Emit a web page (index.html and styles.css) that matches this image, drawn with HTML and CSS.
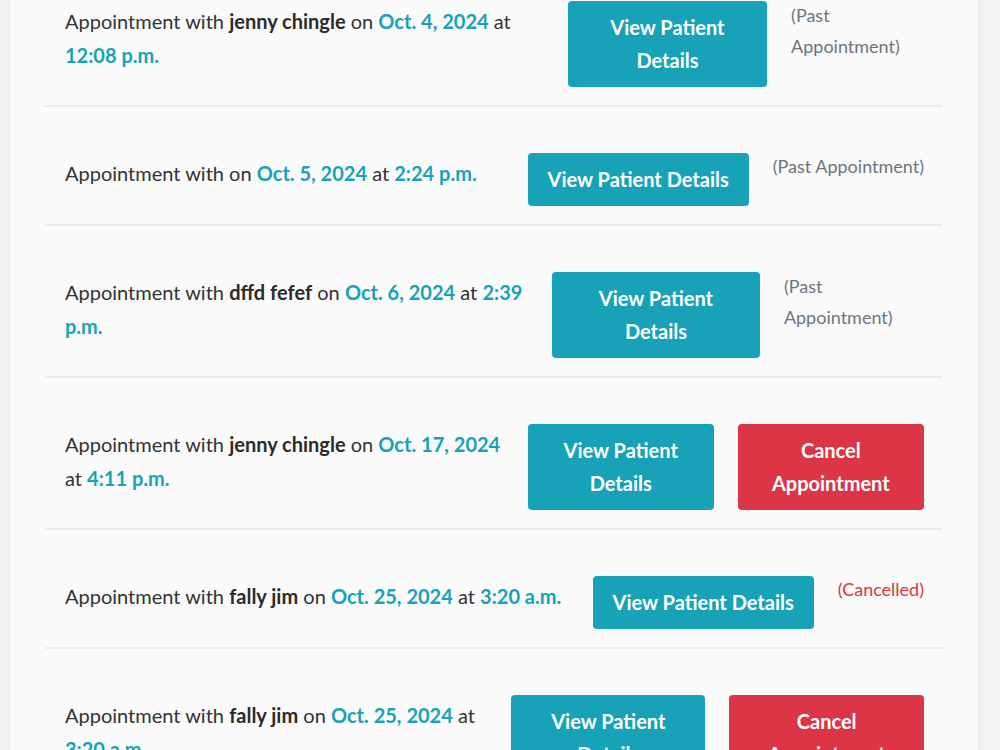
FILE: index.html
```html
<!DOCTYPE html>
<html lang="en">
<head>
<meta charset="utf-8">
<title>Appointments</title>
<link rel="stylesheet" href="styles.css">
</head>
<body>
<div class="card">
  <ul class="appt-list">
    <li class="appt">
      <span class="appt-text">Appointment with <strong>jenny chingle</strong> on <span class="hl">Oct. 4, 2024</span> at <span class="hl">12:08 p.m.</span></span>
      <a class="btn btn-info" href="#">View Patient Details</a>
      <span class="status">(Past Appointment)</span>
    </li>
    <li class="appt">
      <span class="appt-text">Appointment with  on <span class="hl">Oct. 5, 2024</span> at <span class="hl">2:24 p.m.</span></span>
      <a class="btn btn-info" href="#">View Patient Details</a>
      <span class="status">(Past Appointment)</span>
    </li>
    <li class="appt">
      <span class="appt-text">Appointment with <strong>dffd fefef</strong> on <span class="hl">Oct. 6, 2024</span> at <span class="hl">2:39 p.m.</span></span>
      <a class="btn btn-info" href="#">View Patient Details</a>
      <span class="status">(Past Appointment)</span>
    </li>
    <li class="appt">
      <span class="appt-text">Appointment with <strong>jenny chingle</strong> on <span class="hl">Oct. 17, 2024</span> at <span class="hl">4:11 p.m.</span></span>
      <a class="btn btn-info" href="#">View Patient Details</a>
      <a class="btn btn-danger" href="#">Cancel Appointment</a>
    </li>
    <li class="appt">
      <span class="appt-text">Appointment with <strong>fally jim</strong> on <span class="hl">Oct. 25, 2024</span> at <span class="hl">3:20 a.m.</span></span>
      <a class="btn btn-info" href="#">View Patient Details</a>
      <span class="status status-cancelled">(Cancelled)</span>
    </li>
    <li class="appt">
      <span class="appt-text">Appointment with <strong>fally jim</strong> on <span class="hl">Oct. 25, 2024</span> at <span class="hl">3:20 a.m.</span></span>
      <a class="btn btn-info" href="#">View Patient Details</a>
      <a class="btn btn-danger" href="#">Cancel Appointment</a>
    </li>
  </ul>
</div>
</body>
</html>
```

FILE: styles.css
```css
html, body {
  margin: 0;
  padding: 0;
  background: #f3f3f3;
  font-family: Lato, "Noto Sans", sans-serif;
  color: #333;
  overflow: hidden;
  height: 750px;
}

.card {
  width: 968px;
  margin: -45px 0 0 10px;
  padding: 0 36px 0 35px;
  box-sizing: border-box;
  background: #fafafa;
  box-shadow: 0 0 6px rgba(0, 0, 0, 0.06);
  min-height: 900px;
}

.appt-list {
  list-style: none;
  margin: 0;
  padding: 0;
}

.appt {
  display: flex;
  align-items: center;
  gap: 24px;
  padding: 19px 18px 18px 20px;
  border-bottom: 2px solid #ebebeb;
}

.appt-text {
  font-size: 20px;
  line-height: 34px;
  margin-top: 14px;
  margin-right: auto;
}

.appt-text strong {
  font-weight: 700;
  color: #2b2b2b;
}

.hl {
  color: #17a2b8;
  font-weight: 700;
}

.btn {
  display: block;
  margin-top: 27px;
  padding: 10px 20px;
  font-size: 20px;
  line-height: 33px;
  font-weight: 700;
  color: #fff;
  text-decoration: none;
  text-align: center;
  border-radius: 4px;
}

.btn-info {
  background: #17a2b8;
}

.btn-danger {
  background: #dc3545;
}

.status {
  font-size: 18px;
  line-height: 31px;
  color: #6c757d;
}

.status-cancelled {
  color: #dc3545;
}
```
